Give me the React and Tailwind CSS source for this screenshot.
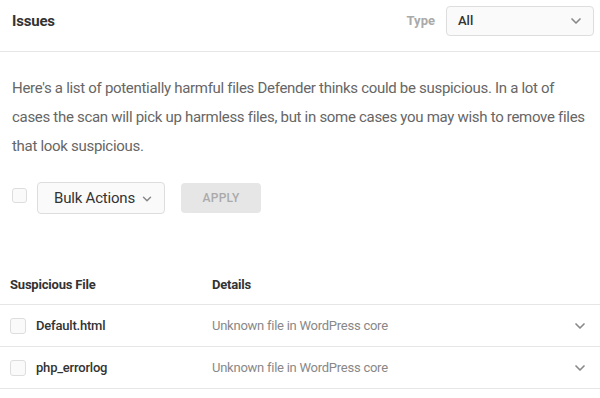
import { ChevronDown } from "lucide-react";

const files = [
  { name: "Default.html", details: "Unknown file in WordPress core" },
  { name: "php_errorlog", details: "Unknown file in WordPress core" },
];

function Checkbox() {
  return <span className="block w-4 h-4 rounded-[3px] border border-[#ddd] bg-[#fafafa]" />;
}

export default function App() {
  return (
    <div className="w-[600px] h-[398px] bg-white font-['Roboto',sans-serif] text-[#333] overflow-hidden">
      {/* Header */}
      <div className="h-[52px] flex items-start justify-between pt-[6px] pl-3 pr-[6px] border-b border-[#e6e6e6]">
        <div className="h-[30px] flex items-center">
          <h2 className="text-[15px] font-bold text-[#333] tracking-[-0.2px]">Issues</h2>
        </div>
        <div className="flex items-center gap-[11px]">
          <span className="text-[13px] font-bold text-[#aaa]">Type</span>
          <div className="w-[148px] h-[30px] rounded-[4px] border border-[#ddd] bg-[#fafafa] flex items-center justify-between pl-[11px] pr-[9px]">
            <span className="text-[13px] font-medium text-[#333]">All</span>
            <ChevronDown className="w-4 h-4 text-[#888]" strokeWidth={2.5} />
          </div>
        </div>
      </div>

      {/* Intro */}
      <div className="pl-3 pr-[6px] pt-[22px]">
        <p className="text-[15px] leading-[29px] text-[#666] tracking-[-0.3px]">
          Here's a list of potentially harmful files Defender thinks could be suspicious. In a lot of cases the scan will pick up harmless files, but in some cases you may wish to remove files that look suspicious.
        </p>
        <div className="flex items-center mt-[21px]">
          <span className="block w-[15px] h-[15px] rounded-[3px] border border-[#ddd] bg-[#fafafa] -mt-[6px]" />
          <div className="ml-[10px] h-[32px] w-[128px] rounded-[4px] border border-[#ddd] bg-[#fafafa] flex items-center pl-4 gap-[5px]">
            <span className="text-[15px] text-[#333] tracking-[-0.2px]">Bulk Actions</span>
            <ChevronDown className="w-[14px] h-[14px] text-[#888] mt-[2px]" strokeWidth={2.5} />
          </div>
          <button className="ml-4 h-[30px] w-[80px] rounded-[4px] bg-[#e6e6e6] text-[12px] font-medium text-[#aaa] tracking-[0.3px]">
            APPLY
          </button>
        </div>
      </div>

      {/* Table */}
      <div className="mt-[49px]">
        <div className="h-[42px] flex items-center border-b border-[#e6e6e6] text-[13px] font-bold text-[#333] pt-[3px] tracking-[-0.2px]">
          <span className="pl-[10px] w-[212px]">Suspicious File</span>
          <span>Details</span>
        </div>
        {files.map((f) => (
          <div key={f.name} className="h-[42px] flex items-center border-b border-[#e6e6e6]">
            <div className="w-[212px] flex items-center pl-[10px] gap-[10px]">
              <Checkbox />
              <span className="text-[13px] font-medium text-[#333] tracking-[-0.2px]">{f.name}</span>
            </div>
            <span className="flex-1 text-[13px] text-[#888] tracking-[-0.25px]">{f.details}</span>
            <ChevronDown className="w-4 h-4 text-[#888] mr-[12px]" strokeWidth={2.5} />
          </div>
        ))}
      </div>
    </div>
  );
}
